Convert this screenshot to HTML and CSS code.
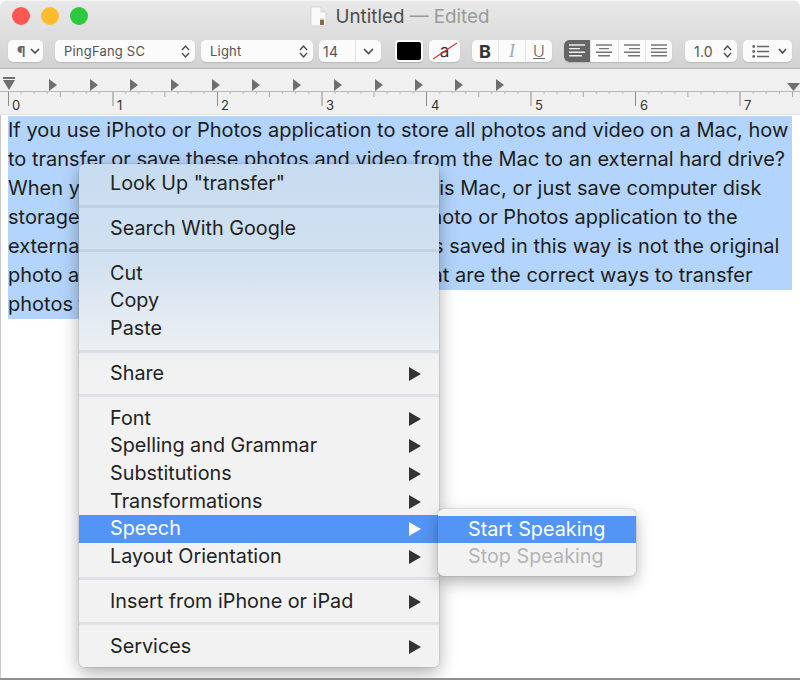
FILE: index.html
```html
<!DOCTYPE html>
<html lang="en">
<head>
<meta charset="utf-8">
<title>Untitled — Edited</title>
<link rel="stylesheet" href="styles.css">
</head>
<body>
<div class="window">
  <header class="chrome">
    <div class="titlebar">
      <div class="lights"><span class="light red"></span><span class="light yellow"></span><span class="light green"></span></div>
      <div class="title">
        <svg class="docicon" width="17" height="21" viewBox="0 0 17 21"><path d="M1 1h10l5 5v14H1z" fill="#fafafa" stroke="#cfcfcf" stroke-width=".8"/><path d="M11 1v5h5" fill="#e6e6e6" stroke="#cfcfcf" stroke-width=".8"/><rect x="10" y="14" width="4" height="5" fill="#8a6a44"/><rect x="10" y="12.5" width="4" height="1.5" fill="#d9c9a8"/></svg>
        <span class="name">Untitled</span><span class="edited">&nbsp;— Edited</span>
      </div>
    </div>
    <div class="toolbar">
      <div class="ctl para"><span class="pil">¶</span><svg class="chev" width="10" height="6" viewBox="0 0 10 6"><path d="M1 1l4 4 4-4"/></svg></div>
      <div class="ctl font"><span>PingFang SC</span><svg class="updown" width="9" height="13" viewBox="0 0 9 13"><path d="M1 5l3.5-4L8 5M1 8l3.5 4L8 8"/></svg></div>
      <div class="ctl style"><span>Light</span><svg class="updown" width="9" height="13" viewBox="0 0 9 13"><path d="M1 5l3.5-4L8 5M1 8l3.5 4L8 8"/></svg></div>
      <div class="ctl size"><span class="sizeval">14</span><span class="sizebtn"><svg class="chev big" width="11" height="7" viewBox="0 0 11 7"><path d="M1 1l4.5 4.5L10 1"/></svg></span></div>
      <div class="well"><span class="swatch"></span></div>
      <div class="ctl bgwell"><span class="a">a</span><svg class="slash" width="26" height="18" viewBox="0 0 26 18"><path d="M1 17L25 1"/></svg></div>
      <div class="ctl seg biu"><span class="b">B</span><span class="i">I</span><span class="u">U</span></div>
      <div class="ctl seg align">
        <span class="on"><svg width="18" height="14" viewBox="0 0 18 14"><path d="M1 1h16M1 4.6h11M1 8.2h16M1 11.8h13"/></svg></span>
        <span><svg width="18" height="14" viewBox="0 0 18 14"><path d="M1 1h16M4 4.6h10M1 8.2h16M3 11.8h12"/></svg></span>
        <span><svg width="18" height="14" viewBox="0 0 18 14"><path d="M1 1h16M6 4.6h11M1 8.2h16M5 11.8h12"/></svg></span>
        <span><svg width="18" height="14" viewBox="0 0 18 14"><path d="M1 1h16M1 4.6h16M1 8.2h16M1 11.8h16"/></svg></span>
      </div>
      <div class="ctl spacing"><span>1.0</span><svg class="updown" width="9" height="13" viewBox="0 0 9 13"><path d="M1 5l3.5-4L8 5M1 8l3.5 4L8 8"/></svg></div>
      <div class="ctl list"><svg class="listicon" width="18" height="13" viewBox="0 0 18 13"><path d="M5 1.5h12M5 6.5h12M5 11.5h12"/><circle cx="1.7" cy="1.5" r="1.4"/><circle cx="1.7" cy="6.5" r="1.4"/><circle cx="1.7" cy="11.5" r="1.4"/></svg><svg class="chev" width="9" height="6" viewBox="0 0 9 6"><path d="M1 1l3.5 4L8 1"/></svg></div>
    </div>
  </header>

  <div class="ruler">
    <svg width="800" height="46" viewBox="0 0 800 46">
      <defs>
        <pattern id="ticks" x="8" y="23" width="104.6" height="8" patternUnits="userSpaceOnUse">
          <path d="M13.1 0v2M26.1 0v2M39.2 0v2M65.4 0v2M78.4 0v2M91.5 0v2" stroke="#b5b5b5" fill="none"/>
          <path d="M52.3 0v5" stroke="#a8a8a8" fill="none"/>
        </pattern>
      </defs>
      <rect x="0" y="23" width="800" height="8" fill="url(#ticks)"/>
      <path class="baseline" d="M0 22.5h800"/>
      <path class="major" d="M8.5 23v14M113 23v14M217.5 23v14M322 23v14M426.5 23v14M531 23v14M635.5 23v14M740 23v14"/>
      <g class="num">
        <text x="12" y="41">0</text><text x="117" y="41">1</text><text x="221" y="41">2</text><text x="326" y="41">3</text><text x="431" y="41">4</text><text x="535" y="41">5</text><text x="640" y="41">6</text><text x="744" y="41">7</text>
      </g>
      <g class="marks">
        <rect x="3" y="8" width="12" height="2"/>
        <path d="M3 11h12l-6 10z"/>
        <path d="M49 10l8 6-8 6zM90 10l8 6-8 6zM130 10l8 6-8 6zM171 10l8 6-8 6zM212 10l8 6-8 6zM252 10l8 6-8 6zM293 10l8 6-8 6zM334 10l8 6-8 6zM375 10l8 6-8 6zM415 10l8 6-8 6zM455 10l8 6-8 6zM496 10l8 6-8 6z"/>
        <path d="M787 14h13l-6.500 8z"/>
      </g>
    </svg>
  </div>

  <main class="doc">
    <div class="sel">
      <div>If you use iPhoto or Photos application to store all photos and video on a Mac, how</div>
      <div>to transfer or save these photos and video from the Mac to an external hard drive?</div>
      <div>When you want to back up old photos from this Mac, or just save computer disk</div>
      <div>storage space, you can export all from the iPhoto or Photos application to the</div>
      <div>external hard drive. But the photos and videos saved in this way is not the original</div>
      <div>photo and video quality and format. Then what are the correct ways to transfer</div>
    </div>
    <div class="lastline"><span>photos from the Mac to a drive.</span></div>
  </main>

  <nav class="menu">
    <div class="item">Look Up "transfer"</div>
    <div class="sep"></div>
    <div class="item">Search With Google</div>
    <div class="sep"></div>
    <div class="item">Cut</div>
    <div class="item">Copy</div>
    <div class="item">Paste</div>
    <div class="sep"></div>
    <div class="item sub">Share</div>
    <div class="sep"></div>
    <div class="item sub">Font</div>
    <div class="item sub">Spelling and Grammar</div>
    <div class="item sub">Substitutions</div>
    <div class="item sub">Transformations</div>
    <div class="item sub active">Speech</div>
    <div class="item sub">Layout Orientation</div>
    <div class="sep"></div>
    <div class="item sub">Insert from iPhone or iPad</div>
    <div class="sep"></div>
    <div class="item sub">Services</div>
    <div class="submenu">
      <div class="item active">Start Speaking</div>
      <div class="item disabled">Stop Speaking</div>
    </div>
  </nav>
</div>
</body>
</html>
```

FILE: styles.css
```css
* { box-sizing: border-box; }
html, body { margin: 0; height: 100%; background: #fff; }
body { font-family: "Inter", "Liberation Sans", sans-serif; overflow: hidden; }

.window {
  position: relative;
  width: 800px;
  height: 680px;
  display: flex;
  flex-direction: column;
  border-radius: 7px 7px 0 0;
  overflow: hidden;
  border-bottom: 2px solid #8f8f8f;
}

.chrome {
  height: 69px;
  flex: none;
  background: linear-gradient(#e9e9e9, #d2d2d2);
  border-bottom: 1px solid #b4b4b4;
  box-shadow: inset 0 1px 0 #f5f5f5;
}
.titlebar { position: relative; height: 40px; display: flex; justify-content: center; padding-top: 5px; }
.lights { position: absolute; left: 12px; top: 7px; display: flex; gap: 11px; }
.light { width: 18px; height: 18px; border-radius: 50%; }
.red { background: #fc5753; }
.yellow { background: #fdbc2e; }
.green { background: #2cc840; }
.title { display: flex; align-items: center; height: 22px; font-size: 18.800px; }
.docicon { margin-right: 8px; }
.name { color: #4d4d4d; }
.edited { color: #9a9a9a; }

.toolbar { display: flex; align-items: stretch; height: 22px; padding-left: 8px; font-size: 13px; color: #555; }
.ctl {
  display: flex;
  align-items: center;
  background: #fbfbfb;
  border-radius: 5px;
  box-shadow: 0 1px 1px #b9b9b9;
  letter-spacing: .2px;
}
.toolbar svg path { fill: none; stroke: #4a4a4a; }
.chev path { stroke-width: 1.6; }
.updown path { stroke-width: 1.3; }
.para { width: 35px; margin-right: 12px; padding-left: 9px; gap: 4px; }
.pil { font-weight: 700; font-size: 14px; color: #666; }
.font { width: 140px; margin-right: 6px; padding: 0 5px 0 9px; justify-content: space-between; }
.style { width: 112px; margin-right: 6px; padding: 0 5px 0 9px; justify-content: space-between; }
.size { width: 62px; margin-right: 14px; }
.sizeval { flex: none; width: 36px; padding-left: 4px; font-size: 14px; }
.sizebtn { flex: 1; height: 100%; border-left: 1px solid #e2e2e2; display: flex; align-items: center; justify-content: center; }
.well { width: 28px; margin-right: 6px; padding: 2px; background: #fbfbfb; border-radius: 4px; box-shadow: 0 1px 1px #b0b0b0; }
.swatch { display: block; height: 100%; background: #000; border-radius: 2px; }
.bgwell { position: relative; width: 31px; margin-right: 12px; justify-content: center; font-size: 17px; color: #333; letter-spacing: 0; }
.slash { position: absolute; left: 3px; top: 2px; }
.toolbar .slash path { stroke: #d0363a; stroke-width: 1.2; }
.seg span { flex: 1; height: 100%; display: flex; align-items: center; justify-content: center; border-left: 1px solid #e4e4e4; }
.seg span:first-child { border-left: 0; }
.biu { width: 80px; margin-right: 12px; font-size: 17px; letter-spacing: 0; }
.b { font-weight: 700; color: #333; font-size: 18px; }
.i { font: italic 18px "Liberation Serif", serif; color: #aaa; }
.u { text-decoration: underline; color: #666; font-size: 16px; font-weight: 300; }
.align { width: 108px; margin-right: 13px; overflow: hidden; }
.toolbar .align svg path { stroke: #777; stroke-width: 1.4; }
.align .on { background: #666; border-radius: 5px 0 0 5px; }
.toolbar .align .on svg path { stroke: #eee; }
.spacing { width: 52px; margin-right: 6px; padding: 0 5px 0 9px; justify-content: space-between; font-size: 14px; }
.list { width: 49px; padding: 0 5px 0 9px; justify-content: space-between; }
.toolbar .listicon path { stroke: #666; stroke-width: 1.3; }
.listicon circle { fill: #666; }

.ruler { height: 46px; flex: none; background: #f0f0f0; border-bottom: 1px solid #e4e4e4; }
.ruler svg { display: block; }
.baseline { stroke: #b9b9b9; fill: none; }
.major { stroke: #8c8c8c; fill: none; }
.num text { font: 13px "Inter", sans-serif; fill: #333; }
.marks { fill: #6f6f6f; }

.doc {
  flex: 1;
  padding: 1px 8px 0;
  border-left: 1px solid #c9c9c9;
  font-size: 20px;
  line-height: 29px;
  color: #1d1d1d;
  white-space: nowrap;
}
.sel { background: #b3d4fc; width: 784px; margin-left: -1px; }
.lastline { margin-left: -1px; }
.lastline span { display: inline-block; background: #b3d4fc; }

.menu {
  position: absolute;
  left: 79px;
  top: 164px;
  width: 360px;
  height: 503px;
  padding: 6px 0 6px;
  border-radius: 6px;
  background: linear-gradient(#c7dcf0, #d2e1f0 100px, #e3eaf3 150px, #f2f2f2 210px);
  box-shadow: 0 0 0 1px rgba(0,0,0,.07), 0 6px 18px rgba(0,0,0,.32);
  font-size: 19.800px;
  color: #222;
}
.item { position: relative; height: 27.600px; line-height: 27.600px; padding-left: 31px; white-space: nowrap; }
.sep { height: 17.300px; position: relative; }
.sep::after { content: ""; position: absolute; left: 0; right: 0; top: 7px; height: 3px; background: rgba(150,165,180,.22); }
.sub::after {
  content: "";
  position: absolute;
  right: 18px;
  top: 7px;
  border-left: 12px solid #333;
  border-top: 7px solid transparent;
  border-bottom: 7px solid transparent;
}
.active { background: #5295f6; color: #fff; }
.active::after { border-left-color: #fff; }
.disabled { color: #b4b4b4; }
.submenu {
  position: absolute;
  left: 359px;
  top: 345px;
  width: 198px;
  height: 67px;
  padding: 6.500px 0;
  background: #f2f2f2;
  border-radius: 6px;
  box-shadow: 0 0 0 1px rgba(0,0,0,.07), 0 6px 16px rgba(0,0,0,.3);
}
.submenu .item { padding-left: 30px; }
```
